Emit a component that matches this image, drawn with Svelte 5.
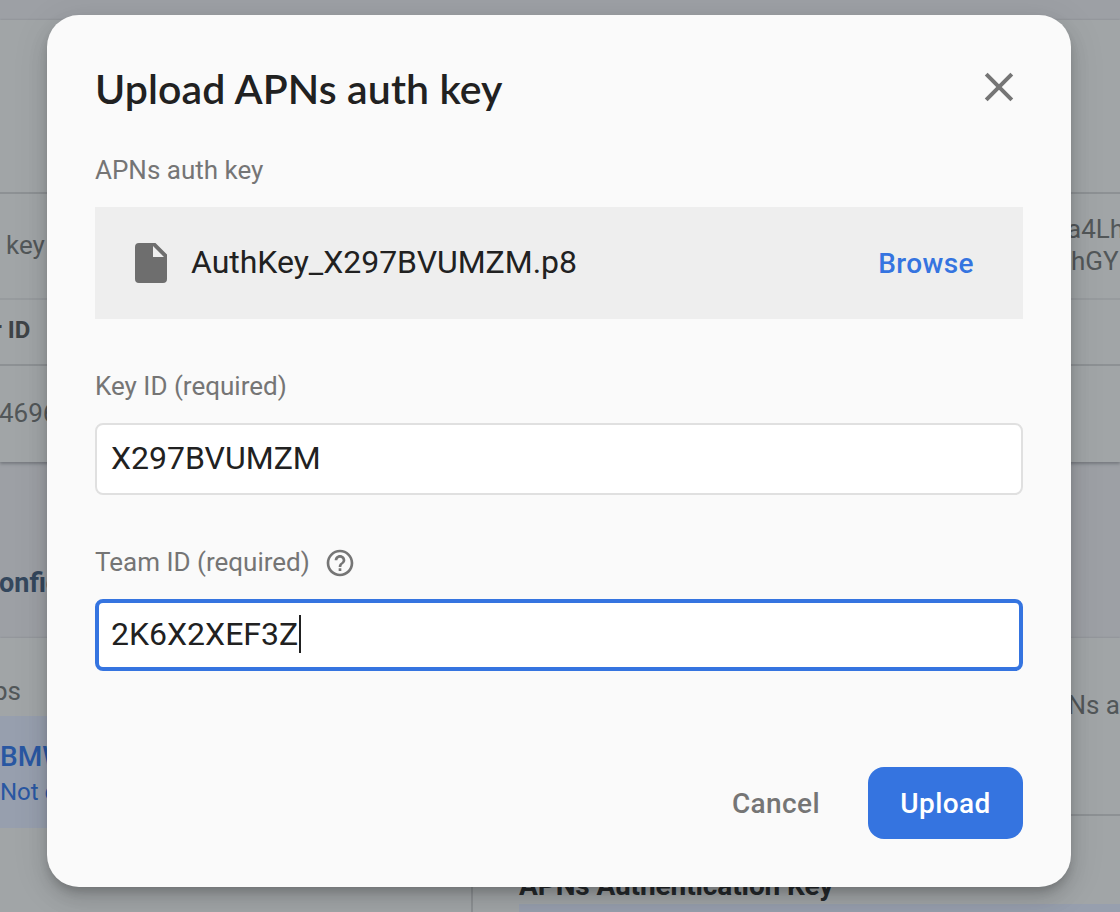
<script>
  let keyId = 'X297BVUMZM';
  let teamId = '2K6X2XEF3Z';
</script>

<div class="screen">
  <div class="page" aria-hidden="true">
    <section class="card first">
      <div class="row blank"></div>
      <div class="row keys"><span class="key">key</span><span class="hash">a4Lh<br /><i>hGY</i></span></div>
      <div class="row head">r ID</div>
      <div class="row value">4696</div>
    </section>
    <h3 class="config">onfig</h3>
    <section class="card second">
      <div class="apps">
        <div class="group">ps</div>
        <div class="selected"><b>BMW</b><span>Not co</span></div>
      </div>
      <div class="details">
        <div class="note">Ns a</div>
        <div class="auth">APNs Authentication Key</div>
        <div class="band"></div>
      </div>
    </section>
  </div>

  <div class="dialog" role="dialog" aria-labelledby="title">
    <header>
      <h1 id="title">Upload APNs auth key</h1>
      <button class="close" aria-label="Close">
        <svg width="32" height="32" viewBox="0 0 32 32"><path d="M3.2 3.2 28.8 28.8M28.8 3.2 3.2 28.8" stroke="#757575" stroke-width="4" fill="none" /></svg>
      </button>
    </header>
    <div class="label">APNs auth key</div>
    <div class="file">
      <svg width="32" height="40" viewBox="0 0 32 40"><path fill="#6e6e6e" fill-rule="evenodd" d="M4 0H20.5L32 11.5V36a4 4 0 0 1-4 4H4a4 4 0 0 1-4-4V4a4 4 0 0 1 4-4ZM18 3V14H29Z" /></svg>
      <span class="name">AuthKey_X297BVUMZM.p8</span>
      <button class="browse">Browse</button>
    </div>
    <div class="label second-label">Key ID (required)</div>
    <div class="input">{keyId}</div>
    <div class="label third-label">
      <span>Team ID (required)</span>
      <svg width="32" height="32" viewBox="0 0 24 24" fill="#757575"><path d="M11 18h2v-2h-2v2zm1-16C6.48 2 2 6.48 2 12s4.480 10 10 10 10-4.480 10-10S17.520 2 12 2zm0 18c-4.410 0-8-3.590-8-8s3.590-8 8-8 8 3.590 8 8-3.590 8-8 8zm0-14c-2.210 0-4 1.790-4 4h2c0-1.100.900-2 2-2s2 .900 2 2c0 2-3 1.750-3 5h2c0-2.250 3-2.500 3-5 0-2.210-1.790-4-4-4z" /></svg>
    </div>
    <div class="input focused">{teamId}<span class="caret"></span></div>
    <footer>
      <button class="cancel">Cancel</button>
      <button class="upload">Upload</button>
    </footer>
  </div>
</div>

<style>
  :global(body) { margin: 0; }
  .screen { position: relative; width: 1120px; height: 912px; overflow: hidden; background: #9da0a5; font-family: Roboto, sans-serif; }
  .screen * { box-sizing: border-box; }
  button { border: 0; padding: 0; background: none; font: 500 28px/36px Roboto, sans-serif; letter-spacing: .4px; }
  h1, h3 { margin: 0; }

  .page { padding-top: 20px; color: #525759; font-size: 26px; white-space: nowrap; }
  .card { background: #a1a5a7; box-shadow: 0 2px 3px #777b80, 0 0 2px #888c90; }
  .first { height: 442px; }
  .row { border-bottom: 2px solid #8d9194; }
  .blank { height: 174px; }
  .keys { height: 106px; border-color: #979b9e; display: flex; justify-content: space-between; line-height: 32px; }
  .key { padding: 35px 0 0 6px; }
  .hash { width: 53px; padding-top: 19px; }
  .hash i { font-style: normal; padding-left: 4px; }
  .head { height: 66px; line-height: 60px; font-weight: 700; font-size: 24px; color: #3e4346; text-indent: -7px; }
  .value { height: 96px; border: 0; line-height: 94px; text-indent: -1px; }
  .config { height: 176px; padding-top: 105px; font-size: 27px; line-height: 32px; font-weight: 700; color: #34475d; text-indent: -1px; }
  .second { height: 300px; display: flex; }
  .apps { width: 473px; border-right: 2px solid #8d9194; }
  .group { height: 78px; line-height: 106px; text-indent: -7px; }
  .selected { height: 112px; background: #979fae; color: #2957a2; padding-top: 25px; display: flex; flex-direction: column; }
  .selected b { font-size: 28px; line-height: 32px; font-weight: 500; }
  .selected span { font-size: 24px; line-height: 38px; }
  .details { flex: 1; }
  .note { height: 178px; border-bottom: 2px solid #8d9194; text-align: right; line-height: 134px; }
  .auth { padding: 52px 0 0 46px; font-size: 28px; line-height: 36px; font-weight: 700; letter-spacing: -.1px; color: #25292c; }
  .band { height: 20px; margin-left: 46px; background: #979fae; }

  .dialog { position: absolute; left: 47px; top: 15px; width: 1024px; height: 872px; padding: 48px; border-radius: 32px; background: #fafafa; display: flex; flex-direction: column; box-shadow: 0 6px 10px -2px rgba(0,0,0,.18), 0 12px 20px 1px rgba(0,0,0,.1), 0 6px 36px 3px rgba(0,0,0,.08); }
  header { display: flex; justify-content: space-between; height: 76px; }
  h1 { font: 600 41px/52px Lato, sans-serif; letter-spacing: .1px; color: #212121; white-space: nowrap; }
  .close { width: 32px; height: 32px; margin: 8px 8px 0 0; }
  svg { display: block; flex: none; }
  .label { height: 68px; font-size: 26px; line-height: 62px; color: #757575; }
  .file { height: 112px; background: #eee; padding: 0 49px 0 40px; display: flex; align-items: center; }
  .name { margin-left: 24px; padding-bottom: 2px; flex: 1; font-size: 32px; letter-spacing: -.03px; color: #212121; }
  .browse { color: #3574e0; padding-top: 2px; }
  .second-label { height: 104px; line-height: 134px; }
  .input { flex: none; height: 72px; border: 2px solid #e0e0e0; border-radius: 8px; background: #fff; padding: 0 14px; font-size: 32px; line-height: 66px; color: #212121; display: flex; }
  .third-label { height: 104px; line-height: 134px; display: flex; gap: 14px; }
  .third-label svg { margin-top: 52px; }
  .focused { border: 4px solid #3574e0; padding: 0 12px; line-height: 62px; }
  .caret { width: 2px; height: 38px; margin: 12px 0 0 1px; background: #212121; }
  footer { display: flex; justify-content: flex-end; gap: 48px; margin-top: 96px; height: 72px; }
  .cancel { color: #757575; padding-top: 2px; }
  .upload { width: 155px; padding-top: 2px; background: #3574e0; color: #fff; border-radius: 16px; }
</style>
